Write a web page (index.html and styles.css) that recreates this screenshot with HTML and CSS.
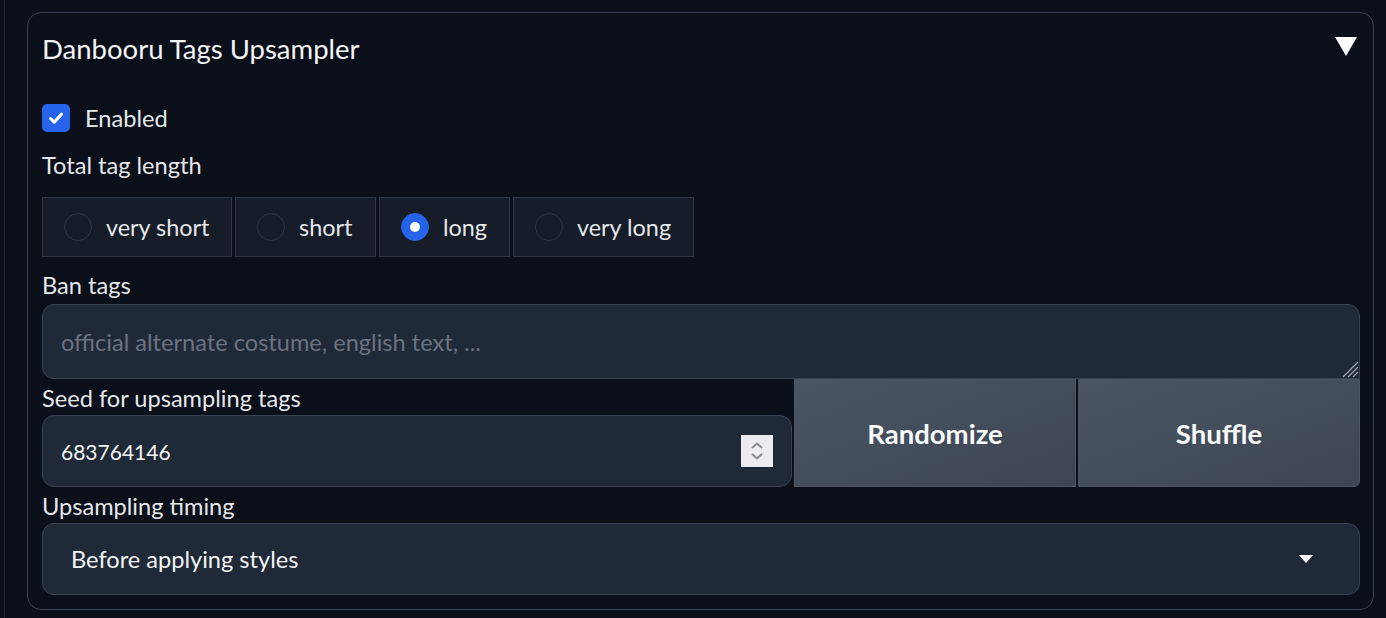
FILE: index.html
```html
<!DOCTYPE html>
<html>
<head>
<meta charset="utf-8">
<link rel="stylesheet" href="styles.css">
</head>
<body>
<div class="outer">
  <div class="panel">
    <div class="header">
      <span class="title">Danbooru Tags Upsampler</span>
      <svg class="collapse" viewBox="0 0 22 19" width="22" height="19"><path d="M0 0 L22 0 L11 19 Z" fill="#fff"/></svg>
    </div>
    <label class="check-row">
      <span class="checkbox">
        <svg viewBox="0 0 16 16" width="20" height="20"><path d="M3.6 8.4 L6.6 11.3 L12.4 4.9" fill="none" stroke="#fff" stroke-width="2.4" stroke-linecap="round" stroke-linejoin="round"/></svg>
      </span>
      <span class="check-label">Enabled</span>
    </label>
    <div class="label lbl-total">Total tag length</div>
    <div class="radios">
      <div class="radio r1"><span class="dot"></span><span>very short</span></div>
      <div class="radio r2"><span class="dot"></span><span>short</span></div>
      <div class="radio r3"><span class="dot on"></span><span>long</span></div>
      <div class="radio r4"><span class="dot"></span><span>very long</span></div>
    </div>
    <div class="label lbl-ban">Ban tags</div>
    <div class="textarea">
      <span class="placeholder">official alternate costume, english text, ...</span>
      <svg class="resize" viewBox="0 0 20 20" width="20" height="20"><path d="M19 4 L4 19 M19 9 L9 19 M19 14 L14 19" stroke="#9ca3af" stroke-width="1.3"/></svg>
    </div>
    <div class="seed-row">
      <div class="seed-col">
        <div class="label lbl-seed">Seed for upsampling tags</div>
        <div class="number">
          <span class="num-val">683764146</span>
          <span class="spinner">
            <svg viewBox="0 0 32 32" width="32" height="32"><path d="M11 13 L16 8.5 L21 13" fill="none" stroke="#8a8a90" stroke-width="2"/><path d="M11 19 L16 23.5 L21 19" fill="none" stroke="#8a8a90" stroke-width="2"/></svg>
          </span>
        </div>
      </div>
      <div class="btn btn-left">Randomize</div>
      <div class="btn btn-right">Shuffle</div>
    </div>
    <div class="label lbl-timing">Upsampling timing</div>
    <div class="dropdown">
      <span class="dd-val">Before applying styles</span>
      <svg class="dd-arrow" viewBox="0 0 14 8" width="14" height="8"><path d="M0 0 L14 0 L7 8 Z" fill="#fff"/></svg>
    </div>
  </div>
</div>
</body>
</html>
```
FILE: styles.css
```css
* { box-sizing: border-box; }
html, body {
  margin: 0;
  padding: 0;
  background: #0b0f19;
  height: 618px;
  overflow: hidden;
}
body {
  font-family: Lato, "Noto Sans", sans-serif;
  color: #e5e7eb;
}
.outer {
  margin-left: 4px;
  border-left: 1px solid #1f2633;
  height: 618px;
  padding: 12px 12px 0 22px;
}
.panel {
  width: 1347px;
  height: 598px;
  border: 1px solid #374151;
  border-radius: 14px;
  padding: 0 13px 0 14px;
  background: #0b0f19;
}
.header {
  height: 70px;
  display: flex;
  align-items: center;
  justify-content: space-between;
}
.title {
  font-size: 27.5px;
  color: #f3f4f6;
}
.collapse {
  margin-right: 3px;
  margin-top: -3px;
}
.check-row {
  display: flex;
  align-items: center;
  height: 28px;
  margin-top: 21px;
}
.checkbox {
  width: 28px;
  height: 28px;
  border-radius: 5px;
  background: #2563eb;
  display: flex;
  align-items: center;
  justify-content: center;
}
.check-label {
  margin-left: 15px;
  font-size: 23.6px;
}
.label {
  font-size: 23.6px;
  line-height: 30px;
  color: #e5e7eb;
}
.lbl-total { margin-top: 18px; }
.radios {
  display: flex;
  gap: 3px;
  margin-top: 17px;
}
.radio {
  height: 60px;
  display: flex;
  align-items: center;
  background: #161c28;
  border: 1px solid #2e3644;
  font-size: 23.4px;
  color: #e5e7eb;
  padding-left: 21px;
}
.r1 { width: 190px; }
.r2 { width: 141px; }
.r3 { width: 131px; }
.r4 { width: 181px; }
.dot {
  width: 28px;
  height: 28px;
  border-radius: 50%;
  background: #161c28;
  border: 1px solid #2e3644;
  margin-right: 14px;
  flex: none;
  display: flex;
  align-items: center;
  justify-content: center;
}
.dot.on {
  background: #2563eb;
  border-color: #2563eb;
}
.dot.on::after {
  content: "";
  width: 10px;
  height: 10px;
  border-radius: 50%;
  background: #fff;
}
.lbl-ban { margin-top: 13px; }
.textarea {
  position: relative;
  height: 75px;
  margin-top: 4px;
  background: #1f2937;
  border: 1px solid #374151;
  border-radius: 12px 12px 0 12px;
  display: flex;
  align-items: center;
  padding-left: 18px;
}
.placeholder {
  font-size: 23.6px;
  color: #6b7280;
}
.resize {
  position: absolute;
  right: 0;
  bottom: 0;
}
.seed-row {
  display: flex;
  gap: 2px;
  height: 108px;
}
.seed-col {
  width: 750px;
  display: flex;
  flex-direction: column;
}
.lbl-seed {
  margin-top: 4px;
}
.number {
  margin-top: 2px;
  height: 72px;
  background: #1f2937;
  border: 1px solid #374151;
  border-radius: 12px;
  display: flex;
  align-items: center;
  justify-content: space-between;
  padding: 0 18px 0 18px;
}
.num-val { font-size: 21px; color: #f3f4f6; }
.spinner {
  width: 32px;
  height: 32px;
  background: #ebebf0;
  display: flex;
}
.btn {
  flex: 1;
  display: flex;
  align-items: center;
  justify-content: center;
  background: linear-gradient(to bottom right, #4b5563, #3d4552);
  border: 1px solid #4b5563;
  font-size: 27.5px;
  font-weight: bold;
  color: #f9fafb;
}
.btn-right {
  border-radius: 0 0 6px 0;
}
.lbl-timing { margin-top: 4px; }
.dropdown {
  margin-top: 2px;
  height: 72px;
  background: #1f2937;
  border: 1px solid #374151;
  border-radius: 12px;
  display: flex;
  align-items: center;
  justify-content: space-between;
  padding: 0 46px 0 28px;
}
.dd-val { font-size: 23.6px; color: #f3f4f6; }
```
